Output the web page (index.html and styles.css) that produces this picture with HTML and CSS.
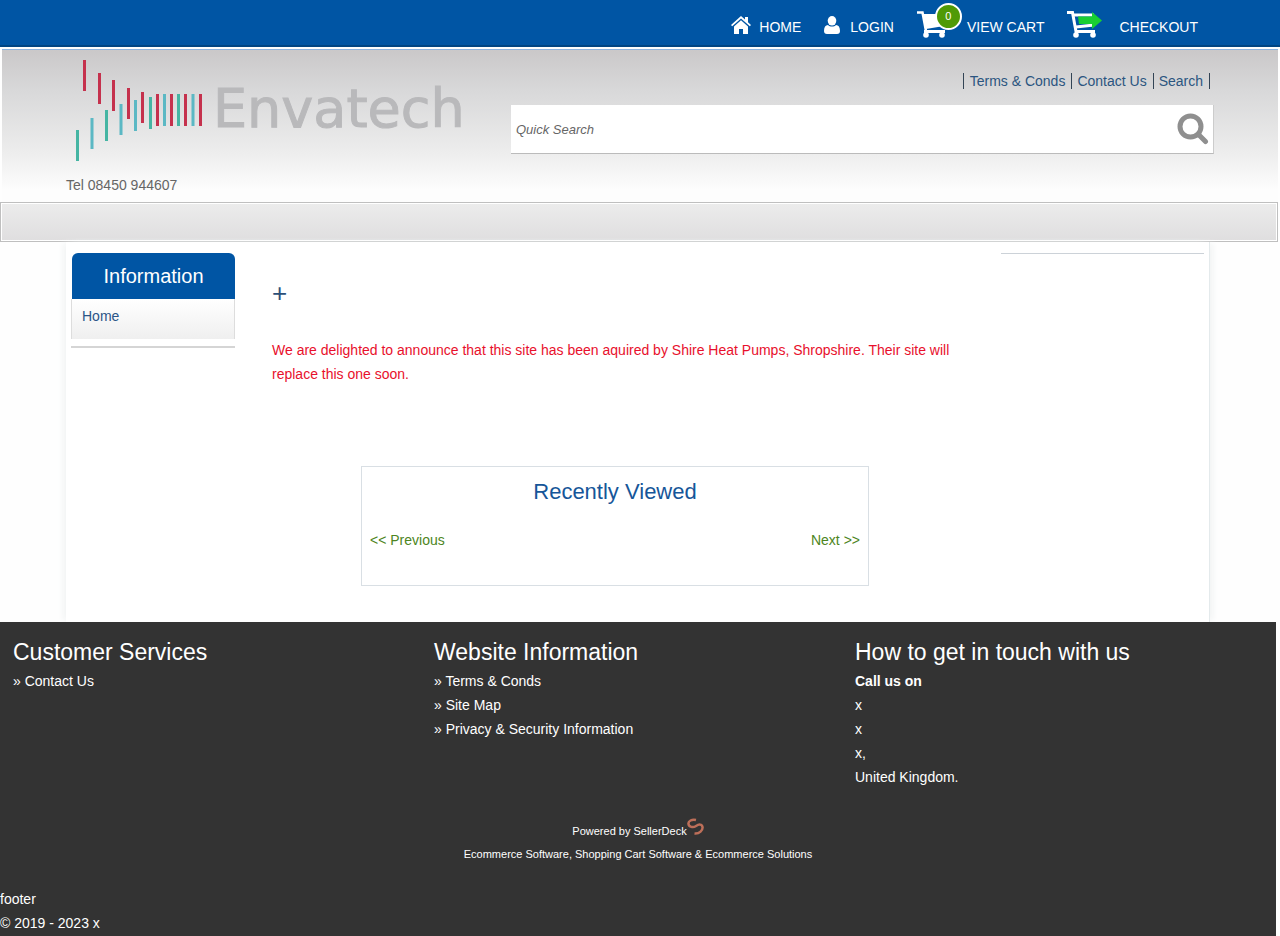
FILE: index.html
```html
<!DOCTYPE html>
<html lang="en">
<head>
<meta charset="utf-8">
<meta name="viewport" content="width=device-width, initial-scale=1">
<title>Envatech</title>
<link rel="stylesheet" href="styles.css">
</head>
<body>
<nav class="topbar" aria-label="Account">
  <a class="toplink" href="#"><span class="icon icon-home"><svg width="20" height="18" viewBox="0 0 20 18"><path d="M0 9 10 0l4 3.600V1h3v5.300L20 9l-1.200 1.300L10 2.600 1.200 10.300z" fill="#fff"/><path d="M3 10.500 10 4.300l7 6.200V18h-5v-5H8v5H3z" fill="#fff"/></svg></span>HOME</a>
  <a class="toplink" href="#"><span class="icon icon-user"><svg width="16" height="18" viewBox="0 0 16 18"><ellipse cx="8" cy="4.800" rx="4.300" ry="4.800" fill="#fff"/><path d="M0 15c0-4 1.500-6 4-6 2 2 6 2 8 0 2.500 0 4 2 4 6 0 2-1 3-3 3H3c-2 0-3-1-3-3z" fill="#fff"/></svg></span>LOGIN</a>
  <a class="toplink" href="#"><span class="icon icon-cart"><svg width="32" height="27" viewBox="0 0 32 27"><path d="M0 1.500h5.500L9 20" fill="none" stroke="#fff" stroke-width="2.500"/><path d="M5.500 3H29l-2 12-18 3z" fill="#fff"/><path d="M7 20.500h21" stroke="#fff" stroke-width="3"/><circle cx="9" cy="24" r="2.800" fill="#fff"/><circle cx="25" cy="24" r="2.800" fill="#fff"/></svg><span class="badge">0</span></span>VIEW CART</a>
  <a class="toplink" href="#"><span class="icon icon-checkout"><svg width="36" height="27" viewBox="0 0 36 27"><path d="M0 1.500h5.500L9 20.500h19" fill="none" stroke="#fff" stroke-width="3"/><path d="M7 4h20M9 16l18-2" fill="none" stroke="#fff" stroke-width="3"/><path d="M11 5.500h14V1l10 8.500L25 18v-5H12z" fill="#19cf32"/><circle cx="9" cy="24" r="2.800" fill="#fff"/><circle cx="26" cy="24" r="2.800" fill="#fff"/></svg></span>CHECKOUT</a>
</nav>

<header class="header">
  <div class="brand">
    <a class="logo" href="#" aria-label="Envatech">
      <svg width="410" height="108" viewBox="0 0 410 108">
        <g stroke="#c5314d" stroke-width="3"><path d="M18.500 5v31M33.500 18v31M47.500 25v31M62.500 33v31M76.500 37v31M91.500 39v32M105.500 39v32M119.500 39v32M134.500 39v32"/></g>
        <g stroke="#45b5a3" stroke-width="3"><path d="M11.500 75v31M40.500 55v31M84.500 42v32M112.500 39v32"/></g>
        <g stroke="#5bb8c4" stroke-width="3"><path d="M26 63v31M55 49v31M69.500 45v31M98.500 39v32M127 39v32"/></g>
        <text class="wordmark" x="147" y="72">Envatech</text>
      </svg>
    </a>
    <p class="tel">Tel 08450 944607</p>
  </div>
  <div class="tools">
    <nav class="quicklinks" aria-label="Quick links"><a href="#">Terms &amp; Conds</a><a href="#">Contact Us</a><a href="#">Search</a></nav>
    <form class="search" role="search">
      <input class="search-box" type="text" placeholder="Quick Search" aria-label="Quick Search">
      <button class="search-button" type="button" aria-label="Search"><svg width="32" height="32" viewBox="0 0 32 32"><circle cx="13.500" cy="13.500" r="10.500" fill="none" stroke="#8f8f8f" stroke-width="5"/><path d="m22 22 6.500 6.500" stroke="#8f8f8f" stroke-width="5" stroke-linecap="round"/></svg></button>
    </form>
  </div>
</header>
<div class="menubar"></div>

<div class="page">
  <aside class="sidebar">
    <h2 class="side-title">Information</h2>
    <div class="side-body"><a href="#">Home</a></div>
    <div class="side-end"></div>
  </aside>
  <main class="content">
    <div class="plus">+</div>
    <p class="notice">We are delighted to announce that this site has been aquired by Shire Heat Pumps, Shropshire. Their site will replace this one soon.</p>
    <section class="recent">
      <h2 class="recent-title">Recently Viewed</h2>
      <div class="pager"><a href="#">&lt;&lt; Previous</a><a href="#">Next &gt;&gt;</a></div>
    </section>
  </main>
  <aside class="rightbar"></aside>
</div>

<footer class="footer">
  <div class="columns">
    <section><h3>Customer Services</h3><ul><li><a href="#">» Contact Us</a></li></ul></section>
    <section><h3>Website Information</h3><ul><li><a href="#">» Terms &amp; Conds</a></li><li><a href="#">» Site Map</a></li><li><a href="#">» Privacy &amp; Security Information</a></li></ul></section>
    <section><h3>How to get in touch with us</h3><ul><li><b>Call us on</b></li><li>x</li><li>x</li><li>x,</li><li>United Kingdom.</li></ul></section>
  </div>
  <div class="powered">
    <p><a href="#">Powered by SellerDeck<svg class="deck" width="17" height="17" viewBox="0 0 17 17"><path d="M9 2C5 1 1 3 1.500 6S6 10 9 8s6-2 6.500 1-3 7-8 6.500" fill="none" stroke="#bd6f59" stroke-width="2.500"/></svg></a></p>
    <p><a href="#">Ecommerce Software, Shopping Cart Software &amp; Ecommerce Solutions</a></p>
  </div>
  <p>footer</p>
  <p>© 2019 - 2023 x</p>
</footer>
</body>
</html>
```
FILE: styles.css
```css
* { box-sizing: border-box; }
body {
  margin: 0;
  background: #fefefe;
  color: #666;
  font: 14px/24px "Liberation Sans", Arial, sans-serif;
}
a { color: inherit; text-decoration: none; }
p, h2, h3, ul { margin: 0; padding: 0; font-weight: normal; }
ul { list-style: none; }
svg { display: block; }

.topbar {
  display: flex;
  justify-content: flex-end;
  gap: 23px;
  height: 47px;
  padding: 7px 82px 0 0;
  background: #0055a4;
  border-bottom: 2px solid #004583;
}
.toplink { display: flex; align-items: flex-end; height: 32px; color: #fff; }
.icon { position: relative; align-self: flex-start; padding-top: 9px; }
.icon-home { width: 28px; }
.icon-user { width: 26px; }
.icon-cart { width: 50px; padding-top: 4px; }
.icon-checkout { width: 52px; padding-top: 4px; }
.badge {
  position: absolute;
  top: -4px;
  left: 18px;
  width: 27px;
  height: 27px;
  border: 2px solid #fff;
  border-radius: 50%;
  background: #4f9a06;
  font-size: 11px;
  line-height: 23px;
  text-align: center;
}

.header {
  display: flex;
  justify-content: space-between;
  margin: 2px 2px 0;
  padding: 0 64px 5px;
  border-top: 1px solid #8db4e0;
  background: linear-gradient(#cac8c9 0, #d8d8d9 40px, #ececec 100px, #fdfdfd 140px);
}
.brand { flex: none; padding-top: 5px; }
.wordmark { font: 54px "DejaVu Sans", sans-serif; fill: #b9b9bb; stroke: #b9b9bb; stroke-width: 1px; }
.tel { padding-top: 10px; }
.tools { width: 703px; padding-top: 19px; }
.quicklinks { display: flex; justify-content: flex-end; padding-right: 4px; color: #2b5580; }
.quicklinks a { padding: 0 6px 0 5px; margin: 4px 0; line-height: 16px; border-right: 1px solid #345; }
.quicklinks a:first-child { padding-left: 6px; border-left: 1px solid #345; }
.search {
  display: flex;
  align-items: center;
  height: 49px;
  margin-top: 12px;
  padding-right: 4px;
  border-right: 1px solid #ccc;
  border-bottom: 1px solid #bbb;
  background: #fff;
}
.search-box {
  flex: 1;
  height: 46px;
  padding: 0 5px;
  border: 0;
  background: transparent;
  font: italic 13px "Liberation Sans", Arial, sans-serif;
}
.search-box::placeholder { color: #666; }
.search-button { padding: 0; border: 0; background: none; }

.menubar {
  height: 40px;
  margin-right: 2px;
  border: 1px solid #bfbfbf;
  box-shadow: inset 0 0 0 1px #fff;
  background: linear-gradient(#ececec, #dfdedf);
}

.page {
  display: flex;
  justify-content: space-between;
  min-height: 380px;
  margin: 0 70px 0 66px;
  padding: 11px 5px 36px;
  border-right: 1px solid #e4eaec;
  background: #fff;
  box-shadow: -5px 0 6px -2px #f2f4f4, 5px 0 6px -2px #f2f4f4;
}
.sidebar { width: 164px; }
.side-title {
  margin-left: 1px;
  border-radius: 6px 6px 0 0;
  background: #0055a4;
  color: #fff;
  font-size: 20px;
  line-height: 46px;
  text-align: center;
}
.side-body {
  height: 40px;
  padding: 5px 10px;
  border: solid #ddd;
  border-width: 0 1px;
  background: linear-gradient(#fff, #efefef);
  color: #2b5587;
}
.side-end { height: 9px; border-bottom: 2px solid #d5d5d5; }
.content { flex: 1; padding: 28px 43px 0 37px; }
.plus { color: #2b4f78; font-size: 26px; }
.notice { padding-top: 33px; color: #e8102c; }
.recent {
  width: 508px;
  height: 120px;
  margin: 80px auto 0;
  padding: 8px;
  border: 1px solid #d9dfe4;
}
.recent-title { color: #165699; font-size: 22px; line-height: 34px; text-align: center; }
.pager { display: flex; justify-content: space-between; padding-top: 19px; color: #4d8522; }
.rightbar { width: 203px; height: 1px; background: #ccd2d8; }

.footer { margin-right: 4px; padding-bottom: 1px; background: #333; color: #fff; }
.columns { display: grid; grid-template-columns: repeat(3, 1fr); padding: 13px 0 0 13px; }
.columns h3 { font-size: 23px; line-height: 34px; }
.powered { padding: 29px 0 21px; font-size: 11px; text-align: center; }
.powered svg { display: inline-block; }
.powered p { height: 24px; }
```
